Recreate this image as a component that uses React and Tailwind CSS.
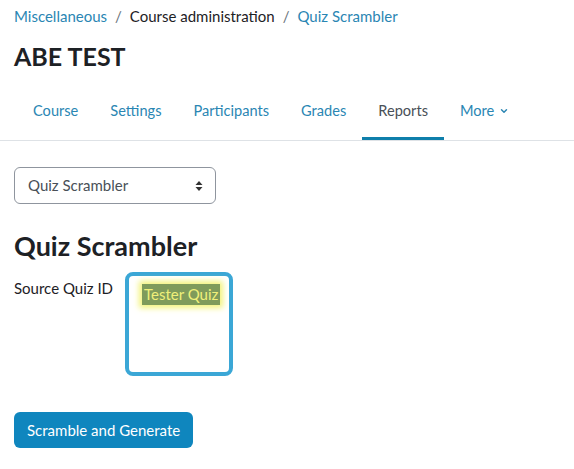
import { ChevronDown } from 'lucide-react';

const tabs = ['Course', 'Settings', 'Participants', 'Grades', 'Reports'];

export default function App() {
  return (
    <div className="min-h-screen bg-white px-[14px] text-[15px] text-[#1d2125]" style={{ fontFamily: 'Lato, "Open Sans", sans-serif' }}>
      <nav className="flex items-center gap-2 pt-[5px] leading-[22px]">
        <a className="text-[#2a86b3]">Miscellaneous</a>
        <span className="text-[#6a737b]">/</span>
        <span>Course administration</span>
        <span className="text-[#6a737b]">/</span>
        <a className="text-[#2a86b3]">Quiz Scrambler</a>
      </nav>

      <h1 className="mt-[14px] text-[25px] font-bold leading-[30px]">ABE TEST</h1>

      <div className="-mx-[14px] mt-[18px] flex border-b border-[#dee2e6] pl-[17px] text-[14.6px]">
        {tabs.map(t => (
          <a
            key={t}
            className={`px-4 pb-[15px] pt-[11px] leading-[22px] ${
              t === 'Reports' ? 'border-b-[3px] border-[#0f7fab] text-[#495057]' : 'border-b-[3px] border-transparent text-[#2a86b3]'
            }`}
          >
            {t}
          </a>
        ))}
        <a className="flex items-center gap-[5px] border-b-[3px] border-transparent px-4 pb-[15px] pt-[11px] leading-[22px] text-[#2a86b3]">
          More <ChevronDown size={10} strokeWidth={3.5} />
        </a>
      </div>

      <div className="mt-[26px] flex h-[37px] w-[202px] items-center justify-between rounded-md border border-[#8f959e] pl-[13px] pr-[12px]">
        <span className="text-[#495057]">Quiz Scrambler</span>
        <svg width="8" height="12" viewBox="0 0 8 12">
          <path d="M4 1 L7.5 5 H0.5 Z" fill="#333" />
          <path d="M4 11 L7.5 7 H0.5 Z" fill="#333" />
        </svg>
      </div>

      <h2 className="mt-[26px] text-[27px] font-bold leading-[32px]">Quiz Scrambler</h2>

      <div className="mt-[10px] flex items-start">
        <label className="mt-[6px] w-[111px] shrink-0 whitespace-nowrap leading-[20px]">Source Quiz ID</label>
        <div className="h-[104px] w-[108px] rounded-lg border-4 border-[#3ba7d6] pl-[13px] pt-[7px]">
          <span className="inline-block whitespace-nowrap bg-[#7f9b5b] px-[2px] leading-[21px] text-[#f0f07a] shadow-[0_0_6px_3px_#f3f37a]">Tester Quiz</span>
        </div>
      </div>

      <button className="mt-[36px] h-[36px] rounded-md bg-[#0f86be] px-[13px] text-white">Scramble and Generate</button>
    </div>
  );
}
